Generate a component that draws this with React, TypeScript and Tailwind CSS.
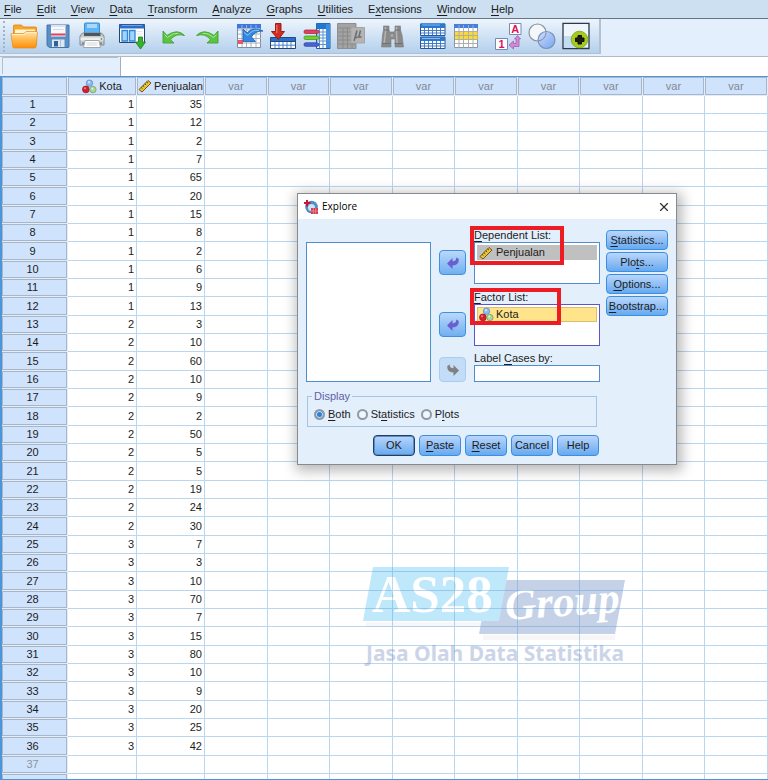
import React, { useState } from 'react';
import { X } from 'lucide-react';

const MENUS: [string, string, string][] = [
  ['', 'F', 'ile'],
  ['', 'E', 'dit'],
  ['', 'V', 'iew'],
  ['', 'D', 'ata'],
  ['', 'T', 'ransform'],
  ['', 'A', 'nalyze'],
  ['', 'G', 'raphs'],
  ['', 'U', 'tilities'],
  ['E', 'x', 'tensions'],
  ['', 'W', 'indow'],
  ['', 'H', 'elp'],
];

// sales per city, 12 stores each
const SALES = [
  35, 12, 2, 7, 65, 20, 15, 8, 2, 6, 9, 13,
  3, 10, 60, 10, 9, 2, 50, 5, 5, 19, 24, 30,
  7, 3, 10, 70, 7, 15, 80, 10, 9, 20, 25, 42,
];

const VAR_COLS = [0, 1, 2, 3, 4, 5, 6, 7, 8];

/* ---------- icons ---------- */

const NominalIcon = () => (
  <svg width="15" height="15" viewBox="0 0 15 15" className="shrink-0">
    <circle cx="7.5" cy="4.2" r="3.2" fill="#8fbcec" stroke="#5b8fd0" strokeWidth=".8" />
    <circle cx="3.9" cy="10.4" r="3.4" fill="#d2202f" stroke="#9b1a2c" strokeWidth=".8" />
    <circle cx="10.9" cy="10.600" r="3.2" fill="#a9d49a" stroke="#6ba562" strokeWidth=".8" />
    <circle cx="3" cy="9.200" r="1" fill="#f28a90" />
    <circle cx="10.3" cy="9.600" r="1.1" fill="#dff2d6" />
    <circle cx="6.9" cy="3.2" r="1.1" fill="#d4e8fb" />
  </svg>
);

const ScaleIcon = () => (
  <svg width="14" height="14" viewBox="0 0 14 14" className="shrink-0">
    <path d="M1 10.500 10 1.500 13 4 4 13Z" fill="#f3c72f" stroke="#6a5516" strokeWidth="1" />
    <path d="m3.2 8.500 1.3 1.200M5 6.700l1.3 1.200M6.900 4.800l1.3 1.200M8.700 3l1.3 1.200" stroke="#4f3d08" strokeWidth="1" />
  </svg>
);

const Svg = ({ children }: { children: React.ReactNode }) => (
  <svg width="28" height="28" viewBox="0 0 28 28" fill="none">{children}</svg>
);

const OpenIcon = () => (
  <Svg>
    <defs>
      <linearGradient id="folder" x1="0" y1="0" x2="0" y2="1">
        <stop offset="0" stopColor="#ffe6b0" />
        <stop offset="0.5" stopColor="#ffb94c" />
        <stop offset="1" stopColor="#ff8d0c" />
      </linearGradient>
    </defs>
    <path d="M3.500 8V4q0-1 1-1h7l2 2h12q1 0 1 1v17H3.500Z" fill="#f7a72a" stroke="#d98416" strokeWidth=".8" />
    <path d="M5 7.500h20v5H5Z" fill="#fff3d0" />
    <path d="M1 12.500q0-1 1-1H14l2-2h10.500q1 0 1 1L26 25q-.2 1-1.200 1H4q-1 0-1.200-1Z" fill="url(#folder)" stroke="#e88a1a" strokeWidth=".7" />
    <path d="M2 12.500h12.500l2-2h10" stroke="#fff0c8" />
  </Svg>
);

const SaveIcon = () => (
  <Svg>
    <path d="M3 3h22v21.500q0 1-1 1H5.500L3 23.500Z" fill="#5a8fc4" stroke="#4474a8" />
    <path d="M7 3h14.500v11.500H7Z" fill="#f6f8fb" />
    <path d="M7 3h14.500v2H7Z" fill="#dde3ec" />
    <path d="M7 11.500h14.500v2H7Z" fill="#e0415c" />
    <path d="M9 7.500h10.500" stroke="#d5dbe3" />
    <path d="M8 17.500h12.500v7.500H8Z" fill="#dfe6ee" />
    <path d="M10 19h4v5.500h-4Z" fill="#2f629c" />
    <path d="M16.500 18v6.500" stroke="#b2c0cf" />
  </Svg>
);

const PrintIcon = () => (
  <Svg>
    <path d="M7.500 1h13q1 0 1 1v10H6.500V2q0-1 1-1Z" fill="#5fb5f4" stroke="#378fd6" />
    <path d="M9 2h10v4H9Z" fill="#a8d9fb" />
    <path d="M4.500 11h19l2.500 3v9H2v-9Z" fill="#c6cace" stroke="#85898e" />
    <path d="M6 11h16.500v3H6Z" fill="#50555b" />
    <path d="M2.500 15.500h23v3h-23Z" fill="#eceef0" />
    <path d="M4 21.500h20" stroke="#7e8389" strokeWidth="2" />
    <path d="M7 18.500h14l1.500 7h-17Z" fill="#fff" stroke="#a2a7ac" />
    <path d="M8.500 21h11M8.500 23h11" stroke="#d2d6da" />
    <circle cx="23.500" cy="17" r="1" fill="#64a94d" />
  </Svg>
);

const RecallIcon = () => (
  <Svg>
    <path d="M.500 2.500h25v18H.500Z" fill="#fff" stroke="#2c4468" />
    <path d="M.500 2.500h25v4H.500Z" fill="#2d6cc8" />
    <path d="M3 3.500h20" stroke="#6ea3e6" />
    <path d="M3 8.500h5.500v10.500H3ZM10.500 8.500h5.500v10.500h-5.500Z" fill="#9fd4fb" stroke="#2f86da" strokeWidth="1.300" />
    <path d="M17.500 9.500h6M17.500 12h6" stroke="#dfe6f0" />
    <path d="M19.500 15h4v5h3L21.500 27l-5-7h3Z" fill="#36b22e" stroke="#1c7d1b" strokeWidth=".8" />
  </Svg>
);

const UndoIcon = () => (
  <Svg>
    <path d="M3 9v12h11l-3.500-3.200q5-7 14-4.300Q17.500 6 7 13.500Z" fill="#5cc443" stroke="#46a036" strokeWidth=".9" />
    <path d="m4.500 12.500 3 3q5-5 11-4.200" stroke="#a9e892" />
  </Svg>
);

const RedoIcon = () => (
  <Svg>
    <path d="M24 9v12H13l3.500-3.200q-5-7-14-4.300Q9.500 6 20 13.500Z" fill="#5cc443" stroke="#46a036" strokeWidth=".9" />
    <path d="m22.500 12.500-3 3q-5-5-11-4.200" stroke="#a9e892" />
  </Svg>
);

const GotoCaseIcon = () => (
  <Svg>
    <path d="M2.500 2.500h23v23h-23Z" fill="#fff" stroke="#7f8da2" />
    <path d="M2 2h24v4.500H2Z" fill="#3f78dc" />
    <path d="M7 3v22M11.500 3v22M16 3v22M21 3v22M3 8h23M3 12h23M3 16.500h23M3 21h23" stroke="#a4b2c5" />
    <path d="M3 18h5v4H3Z" fill="#f2545f" />
    <path d="M8 7v12.500h12.500l-4-4.500q3-6 11.500-6Q18 4 12 11Z" fill="#3387e0" stroke="#175fae" strokeWidth=".8" />
    <path d="M9 10.500l4 3q4-6.500 11-5" stroke="#8fc4f7" />
  </Svg>
);

const GotoVarIcon = () => (
  <Svg>
    <path d="M1.500 16.500h25v10h-25Z" fill="#fff" stroke="#2c4468" />
    <path d="M1.500 15.500h25v4h-25Z" fill="#2a6fc9" stroke="#234a80" />
    <path d="M6 20v6M10 20v6M14 20v6M18 20v6M22 20v6M2 23.200h24" stroke="#4b86cd" />
    <path d="M6.500 1.500h5.500v8h3.500l-6.200 8L2.500 9.500h4Z" fill="#d32c1f" stroke="#8d160e" strokeWidth=".9" />
    <path d="M7.800 3v8" stroke="#f28a7c" />
  </Svg>
);

const VariablesIcon = () => (
  <Svg>
    <path d="M13.500 1.500h13.500v25H13.500Z" fill="#fff" stroke="#2c5a96" />
    <path d="M13.500 1.500h13.500V7H13.500Z" fill="#1e78d2" />
    <path d="M23 2h4v24h-4Z" fill="#3c8ddd" />
    <path d="M16.500 7v19M20 7v19M14 10h13M14 13h13M14 16h13M14 19h13M14 22.500h13" stroke="#5a93d4" />
    <rect x="1" y="8" width="15" height="3.500" rx="1.500" fill="#e0415c" stroke="#a1223d" strokeWidth=".7" />
    <rect x="1" y="14" width="15" height="3.500" rx="1.500" fill="#6fd02f" stroke="#3f8d17" strokeWidth=".7" />
    <rect x="1" y="20.800" width="15" height="3.500" rx="1.500" fill="#4965d8" stroke="#2a3c9a" strokeWidth=".7" />
  </Svg>
);

const DescriptivesIcon = () => (
  <Svg>
    <path d="M.500 1.500h18.500v25H.500Z" fill="#a3a3a3" stroke="#8f8f8f" />
    <path d="M1 6h18M1 10h18M1 14h18M1 18h18M1 22h18M6 6v20M10.500 6v20M15 6v20" stroke="#8a8a8a" />
    <path d="M14 5.500h13.500V21H14Z" fill="#b4b4b4" stroke="#a4a4a4" />
    <path d="m17 19 3-10.500-1.500 6q.5 2 3.500 0l1.500-6-1.500 5.500q0 2 2.500.5" stroke="#6f6f6f" strokeWidth="1.500" />
  </Svg>
);

const FindIcon = () => (
  <Svg>
    <path d="M5.500 4h5.500V8l1 2h4l1-2V4h5.500V8l1.500 5 1.500 12h-8.500v-8h-4v8H3.500L4.500 13l1-5Z" fill="#8a8a8a" stroke="#7b7b7b" strokeWidth=".6" />
    <path d="M7.500 5v5L6 22M18.500 5v5l.5 12" stroke="#b4b4b4" strokeWidth="1.500" />
    <path d="M4 21.500h8M16.500 21.500h8M5.500 8h5.500M17 8h5.500" stroke="#707070" />
    <circle cx="14" cy="13.500" r="1.500" fill="#aaa" />
  </Svg>
);

const SplitIcon = () => (
  <Svg>
    <path d="M1.500 2h24.500v11.500H1.500ZM1.500 15h24.500v11.500H1.500Z" fill="#fff" stroke="#24579c" />
    <path d="M1.500 1.500h24.500V6H1.500ZM1.500 15h24.500v4H1.500Z" fill="#2b78d3" />
    <path d="M3 3h18M3 16.500h18" stroke="#83b9f0" />
    <path d="M5.500 6v7M9.500 6v7M13.500 6v7M17.500 6v7M21.500 6v7M2 8.500h24M2 11h24M5.500 19v7M9.500 19v7M13.500 19v7M17.500 19v7M21.500 19v7M2 21.500h24M2 24h24" stroke="#447fc6" />
  </Svg>
);

const SelectCasesIcon = () => (
  <Svg>
    <path d="M1.500 2.500h23v23h-23Z" fill="#fff" stroke="#8a96a8" />
    <path d="M1 2h24v4H1Z" fill="#4580e0" />
    <path d="M2 9.500h22.500v8H2Z" fill="#ffd92e" />
    <path d="M6 3v22.500M10.500 3v22.500M15.500 3v22.500M20 3v22.500M2 9.500h22.500M2 13.500h22.500M2 17.500h22.500M2 21.500h22.500" stroke="#a9b0ae" />
  </Svg>
);

const ValueLabelsIcon = () => (
  <Svg>
    <path d="M15.500 1.500h11.500v11H15.500ZM1.500 16.500h12v11h-12Z" fill="#fff" stroke="#7789b5" />
    <text x="21.200" y="11" textAnchor="middle" fontSize="11" fontWeight="700" fill="#e0115c" fontFamily="Liberation Sans, sans-serif">A</text>
    <text x="7.500" y="26" textAnchor="middle" fontSize="11" fontWeight="700" fill="#e0115c" fontFamily="Liberation Sans, sans-serif">1</text>
    <path d="M23.500 13.500 20.500 17h1.500v4.500h-2.500v-2.500l-4.500 4 4.500 4v-2.500h5.500V17h1.500Z" fill="#d08ad4" stroke="#a45fab" strokeWidth=".8" />
  </Svg>
);

const SetsIcon = () => (
  <Svg>
    <defs>
      <linearGradient id="set" x1="0" y1="0" x2="1" y2="1">
        <stop offset="0" stopColor="#c4dafc" />
        <stop offset="1" stopColor="#6f9df0" />
      </linearGradient>
    </defs>
    <circle cx="9.500" cy="10.500" r="8.500" fill="#f3f6fb" stroke="#8a919d" strokeWidth="1.200" />
    <circle cx="18.500" cy="18" r="8.500" fill="url(#set)" fillOpacity=".85" stroke="#7b8fb8" strokeWidth="1.200" />
    <path d="M18 10.500a8.500 8.500 0 0 1-8 8.500" stroke="#8a919d" />
  </Svg>
);

const AddIcon = () => (
  <Svg>
    <path d="M1 1.500h26v25H1Z" fill="#e6f1fb" stroke="#2d3946" strokeWidth="1.300" />
    <path d="M2 2h24v12H2Z" fill="#eef5fc" />
    <path d="M2 14h12v12H2Z" fill="#c2dcf2" />
    <circle cx="17.500" cy="17.500" r="8.300" fill="#a5cc1d" stroke="#8bb11a" />
    <path d="M16 13.500h3.500v2.500H22v3.500h-2.500v2.500H16v-2.500h-2.500v-3.500H16Z" fill="#1d2010" stroke="#111" />
  </Svg>
);

const TOOL_GROUPS = [
  [['Open', OpenIcon], ['Save', SaveIcon], ['Print', PrintIcon]],
  [['Recall dialog', RecallIcon]],
  [['Undo', UndoIcon], ['Redo', RedoIcon]],
  [['Go to case', GotoCaseIcon], ['Go to variable', GotoVarIcon], ['Variables', VariablesIcon], ['Descriptives', DescriptivesIcon]],
  [['Find', FindIcon]],
  [['Split file', SplitIcon], ['Select cases', SelectCasesIcon]],
  [['Value labels', ValueLabelsIcon], ['Variable sets', SetsIcon], ['Customize', AddIcon]],
] as [string, () => React.ReactElement][][];

const AppIcon = () => (
  <svg width="14" height="14" viewBox="0 0 14 14">
    <circle cx="7.500" cy="7" r="6.300" fill="#4f8fc8" />
    <circle cx="7.500" cy="7.500" r="3.500" fill="#cfe2f2" />
    <path d="M3 0v6.500M0 3h6.500" stroke="#c8143c" strokeWidth="2" />
    <path d="M7 8h7v6H7Z" fill="#d43b50" />
    <path d="M7 11h7M9.300 8v6M11.700 8v6" stroke="#f0a5b0" strokeWidth=".6" />
  </svg>
);

const MoveArrow = ({ fill, flip }: { fill: string; flip?: boolean }) => (
  <svg width="14" height="14" viewBox="0 0 14 14">
    <path
      d="M1 7.500 6.500 2v3.300Q10.500 5.500 10.200 1.500L12.800 3Q13 9.500 6.500 9.500V13Z"
      fill={fill}
      transform={flip ? 'matrix(-1 0 0 1 14 0)' : undefined}
    />
  </svg>
);

/* ---------- parts ---------- */

const Key = ({ parts }: { parts: [string, string, string] }) => (
  <span>
    {parts[0]}
    <span className="underline underline-offset-2">{parts[1]}</span>
    {parts[2]}
  </span>
);

const MoveButton = ({ label, disabled }: { label: string; disabled?: boolean }) => (
  <button
    aria-label={label}
    disabled={disabled}
    className={
      disabled
        ? 'flex h-[25px] w-[27px] items-center justify-center rounded-[4px] border border-[#a9cdf2] bg-[#c3ddf8]'
        : 'flex h-[25px] w-[27px] items-center justify-center rounded-[4px] border border-[#3f90df] bg-linear-to-b from-[#b9d8fb] to-[#71aff0]'
    }
  >
    <MoveArrow fill={disabled ? '#808080' : '#6a5fcf'} flip={disabled} />
  </button>
);

const DialogButton = ({ parts, primary, className = '' }: { parts: [string, string, string]; primary?: boolean; className?: string }) => (
  <button
    className={`flex items-center justify-center rounded-[4px] border bg-linear-to-b from-[#b9d6fb] to-[#66a9ef] ${
      primary ? 'border-[#1f3f66] shadow-[inset_0_0_0_1px_#5b8fca]' : 'border-[#3a8fe2]'
    } ${className}`}
  >
    <Key parts={parts} />
  </button>
);

const ExploreDialog = () => {
  const [display, setDisplay] = useState('both');

  const options: [string, [string, string, string]][] = [
    ['both', ['', 'B', 'oth']],
    ['statistics', ['St', 'a', 'tistics']],
    ['plots', ['P', 'l', 'ots']],
  ];

  return (
    <div
      role="dialog"
      aria-label="Explore"
      className="absolute left-[297px] top-[193px] z-10 w-[380px] border border-[#858b93] bg-[#e3effb] shadow-[2px_3px_12px_3px_rgba(0,0,0,0.28)]"
    >
      <div className="flex h-[25px] items-center gap-1 bg-white pl-[6px] pr-[5px] font-['Open_Sans',sans-serif] text-[10px] text-black">
        <AppIcon />
        <span className="flex-1">Explore</span>
        <button aria-label="Close"><X size={14} strokeWidth={2} color="#333" /></button>
      </div>

      <div className="pb-2 pl-2 pr-2 text-[11px] leading-[13px]">
        <div className="flex">
          <div className="mt-[23px] h-[140px] w-[125px] border border-[#4f8fd0] bg-white" />

          <div className="ml-2 flex w-[27px] flex-col pt-[31px]">
            <MoveButton label="Move to Dependent List" />
            <div className="mt-[37px]"><MoveButton label="Move to Factor List" /></div>
            <div className="mt-[20px]"><MoveButton label="Move to Label Cases by" disabled /></div>
          </div>

          <div className="ml-2 flex w-[126px] flex-col pt-[10px]">
            <div className="relative">
              <div><Key parts={['', 'D', 'ependent List:']} /></div>
              <div className="h-[42px] border border-[#4f8fd0] bg-white p-[2px]">
                <div className="flex h-[15px] items-center gap-[3px] bg-[#c0c0c0] pl-[2px]">
                  <ScaleIcon />
                  <span>Penjualan</span>
                </div>
              </div>
              <div className="absolute -left-1 -top-[3px] h-[39px] w-[94px] border-4 border-[#ed1c24]" />
            </div>

            <div className="relative mt-[7px]">
              <div><Key parts={['', 'F', 'actor List:']} /></div>
              <div className="h-[42px] border border-[#5a55c8] bg-white p-[2px]">
                <div className="flex h-[15px] items-center gap-[2px] bg-[#ffe48c] pl-[2px] shadow-[inset_0_0_0_1px_#d8bf6a]">
                  <NominalIcon />
                  <span>Kota</span>
                </div>
              </div>
              <div className="absolute -left-1 -top-[3px] h-[37px] w-[91px] border-4 border-[#ed1c24]" />
            </div>

            <label className="mt-[6px]" htmlFor="label-cases"><Key parts={['Label ', 'C', 'ases by:']} /></label>
            <input id="label-cases" type="text" className="h-[17px] w-full border border-[#4f8fd0] bg-white px-1 outline-none" />
          </div>

          <div className="ml-[6px] flex flex-1 flex-col gap-[2px] pt-[11px]">
            <DialogButton parts={['', 'S', 'tatistics...']} className="h-5" />
            <DialogButton parts={['Plo', 't', 's...']} className="h-5" />
            <DialogButton parts={['', 'O', 'ptions...']} className="h-5" />
            <DialogButton parts={['', 'B', 'ootstrap...']} className="h-5" />
          </div>
        </div>

        <fieldset className="mt-[8px] ml-[1px] h-[37px] w-[290px] border border-[#a5c3e2] px-[6px]">
          <legend className="px-[2px] text-[#5d62a8] ml-[-2px]">Display</legend>
          <div className="mt-[5px] flex gap-[6px]">
            {options.map(([value, parts]) => (
              <label key={value} className="flex items-center gap-[3px]">
                <input
                  type="radio"
                  name="display"
                  checked={display === value}
                  onChange={() => setDisplay(value)}
                  className="h-[11px] w-[11px] appearance-none rounded-full border-2 border-[#8d9aa6] bg-[#f1f6fb] checked:bg-[#2f7fd2] checked:shadow-[inset_0_0_0_1px_#c9e2fa]"
                />
                <Key parts={parts} />
              </label>
            ))}
          </div>
        </fieldset>

        <div className="mt-2 flex gap-1 pl-[67px]">
          <DialogButton parts={['OK', '', '']} primary className="h-[21px] w-[42px]" />
          <DialogButton parts={['', 'P', 'aste']} className="h-[21px] w-[42px]" />
          <DialogButton parts={['', 'R', 'eset']} className="h-[21px] w-[42px]" />
          <DialogButton parts={['Cancel', '', '']} className="h-[21px] w-[42px]" />
          <DialogButton parts={['Help', '', '']} className="h-[21px] w-[42px]" />
        </div>
      </div>
    </div>
  );
};

const Watermark = () => (
  <svg className="absolute left-[350px] top-[460px]" width="290" height="140" viewBox="0 0 290 140">
    <path d="M14 85h132v5H14ZM131 98h132v5H131Z" fill="#f7f7f8" />
    <path d="M137 43h136l-10 54H127Z" fill="#c5d1e6" />
    <path d="M21 30h136l-10 54H11Z" fill="#bfe8fb" />
    <text x="20" y="75" fontSize="53" fontWeight="700" fill="#fff" fontFamily="Liberation Serif, serif">AS28</text>
    <text x="154" y="83" fontSize="43" fontWeight="700" fontStyle="italic" fill="#fff" fontFamily="Liberation Serif, serif" transform="rotate(-4 154 83)">Group</text>
    <text x="14" y="124" fontSize="21" fontWeight="700" fill="#ccd5e8" fontFamily="Noto Sans, sans-serif">Jasa Olah Data Statistika</text>
  </svg>
);

const COL_HEAD = 'border-r border-b border-[#e2edf9] bg-[#d0e3fc] p-0 font-normal shadow-[inset_0_0_0_1px_#a9b6c8]';
const CELL = 'border-r border-b border-[#5698d8]/40 p-0 pr-[2px] text-right';

const DataGrid = () => {
  const rows = Array.from({ length: 38 }, (_, i) => i);

  return (
    <div className="relative min-h-0 flex-1 overflow-hidden border-y border-l-2 border-[#4c94db] bg-white">
      <Watermark />
      <table className="relative w-full table-fixed border-separate border-spacing-0 text-[11px] leading-[13px]">
        <colgroup>
          <col className="w-[66px]" />
          <col className="w-[69px]" />
          <col className="w-[68px]" />
          {VAR_COLS.map(c => (
            <col key={c} className={c % 2 ? 'w-[62px]' : 'w-[63px]'} />
          ))}
          <col />
        </colgroup>
        <thead>
          <tr className="h-[19px]">
            <th className={COL_HEAD}></th>
            <th className={COL_HEAD}>
              <div className="flex items-center justify-center gap-[2px]"><NominalIcon />Kota</div>
            </th>
            <th className={COL_HEAD}>
              <div className="flex items-center justify-center gap-[2px]"><ScaleIcon />Penjualan</div>
            </th>
            {VAR_COLS.map(c => (
              <th key={c} className={`${COL_HEAD} text-[#808896]`}>var</th>
            ))}
            <th className="p-0"></th>
          </tr>
        </thead>
        <tbody>
          {rows.map(i => (
            <tr key={i} className="h-[18px] nth-[3n]:h-[19px]">
              <th
                scope="row"
                className={`${COL_HEAD} pr-1 ${i < SALES.length ? 'text-[#1c1c1c]' : 'text-[#8a94a3]'}`}
              >
                {i < 37 ? i + 1 : ''}
              </th>
              <td className={CELL}>{i < SALES.length ? Math.floor(i / 12) + 1 : ''}</td>
              <td className={CELL}>{SALES[i]}</td>
              {VAR_COLS.map(c => (
                <td key={c} className={CELL}></td>
              ))}
              <td className="border-b border-[#5698d8]/40 p-0"></td>
            </tr>
          ))}
        </tbody>
      </table>
    </div>
  );
};

export default function App() {
  return (
    <div className="relative flex h-screen flex-col overflow-hidden bg-[#e3effc] font-['Liberation_Sans',Arial,sans-serif] text-[11px] text-[#1c1c1c]">
      <nav className="flex h-[19px] shrink-0 items-center gap-[15px] border-b border-[#6c7580] bg-[#cde0f1] pl-1">
        {MENUS.map(m => (
          <button key={m.join('')} className="leading-[13px]"><Key parts={m} /></button>
        ))}
      </nav>

      <div className="flex h-[38px] shrink-0 items-start border-b border-[#b3bac4]">
        <div className="flex h-[35px] items-center gap-[7px] border-r-2 border-b border-[#b4c0cd] bg-linear-to-b from-[#edf5fd] to-[#b4d0ec] pr-[6px]">
          <div className="mr-[-7px] ml-[3px] h-[31px] w-[4px] border-l-2 border-dotted border-[#a3b3c4]" />
          {TOOL_GROUPS.map((group, g) => (
            <div key={g} className="flex">
              {group.map(([label, Icon]) => (
                <button key={label} aria-label={label} className="flex h-8 w-[34px] items-center justify-center">
                  <Icon />
                </button>
              ))}
            </div>
          ))}
        </div>
      </div>

      <div className="flex h-[19px] shrink-0">
        <div className="mb-[2px] ml-[2px] w-[116px] border-t border-l border-[#b3bfcd] bg-[#e3effc]" />
        <input
          type="text"
          aria-label="Cell value"
          className="ml-[2px] min-w-0 flex-1 border-l border-[#a5aebb] bg-white px-1 outline-none"
        />
      </div>

      <DataGrid />
      <ExploreDialog />
    </div>
  );
}
